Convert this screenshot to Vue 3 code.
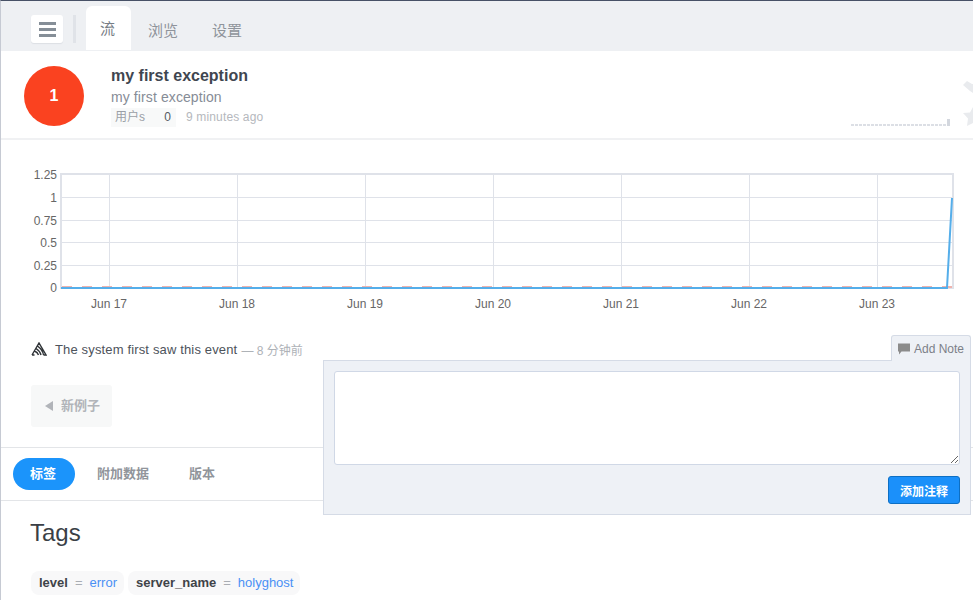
<script setup>
const yTicks = [
  { label: '1.25', y: 174 },
  { label: '1', y: 197 },
  { label: '0.75', y: 220 },
  { label: '0.5', y: 242 },
  { label: '0.25', y: 265 },
  { label: '0', y: 287 }
]
const xTicks = [
  { label: 'Jun 17', x: 109 },
  { label: 'Jun 18', x: 237 },
  { label: 'Jun 19', x: 365 },
  { label: 'Jun 20', x: 493 },
  { label: 'Jun 21', x: 621 },
  { label: 'Jun 22', x: 749 },
  { label: 'Jun 23', x: 877 }
]
const tags = [
  { key: 'level', value: 'error' },
  { key: 'server_name', value: 'holyghost' }
]
</script>

<template>
  <div class="page">
    <header class="topbar">
      <button class="menu-btn" aria-label="menu">
        <span></span><span></span><span></span>
      </button>
      <div class="sep"></div>
      <nav class="top-tabs">
        <a class="top-tab active">流</a>
        <a class="top-tab">浏览</a>
        <a class="top-tab">设置</a>
      </nav>
    </header>

    <section class="event-head">
      <div class="level-badge">1</div>
      <div class="event-info">
        <h1>my first exception</h1>
        <p class="culprit">my first exception</p>
        <div class="meta">
          <span class="users"><span>用户s</span><b>0</b></span>
          <span class="ago">9 minutes ago</span>
        </div>
      </div>
      <svg class="spark" width="100" height="8" viewBox="0 0 100 8">
        <line x1="0" y1="7" x2="96" y2="7" stroke="#dcdfe5" stroke-width="2" stroke-dasharray="3 1" />
        <rect x="96" y="1" width="3" height="7" fill="#d3d7de" />
      </svg>
      <svg class="fav" width="10" height="46" viewBox="0 0 10 46">
        <path d="M0 4 L4 0 L9 3 L10 3 V12 L7 10 Z" fill="#e9ebee" />
        <path d="M10 26 L7 31.5 L0 32 L5 37.5 L4 45 L10 42 Z" fill="#e9ebee" />
      </svg>
    </section>

    <section class="chart-wrap">
      <svg class="chart" width="972" height="160" viewBox="0 160 972 160">
        <rect x="61" y="174" width="892" height="114" fill="#fff" stroke="#dfe2e9" stroke-width="2" />
        <line v-for="t in yTicks.slice(1, 5)" :key="t.label" x1="61" :y1="t.y + 0.5" x2="952" :y2="t.y + 0.5" stroke="#dfe2e9" />
        <line v-for="t in xTicks" :key="t.label" :x1="t.x + 0.5" y1="174" :x2="t.x + 0.5" y2="288" stroke="#dfe2e9" />
        <line x1="62" y1="287" x2="952" y2="287" stroke="#efb3ae" stroke-width="2" stroke-dasharray="10 10" />
        <polyline points="61,288 947,288 952,198" fill="none" stroke="#55aeea" stroke-width="2" />
        <text v-for="t in yTicks" :key="t.label" x="57" :y="t.y + 5" text-anchor="end" class="tick">{{ t.label }}</text>
        <text v-for="t in xTicks" :key="t.label" :x="t.x" y="308" text-anchor="middle" class="tick">{{ t.label }}</text>
      </svg>
    </section>

    <section class="first-seen">
      <svg width="16" height="14" viewBox="0 0 16 14" class="sentry">
        <path d="M1 13 L8 1 L15 13 H12.5 M1 13 H3.5 M6.5 4 C10 6.5 12 9.5 12.5 13 M5 6.5 C8 8.5 9.5 10.5 10 13 M3.5 9 C6 10 7 11.5 7.5 13" fill="none" stroke="#2f3337" stroke-width="1.4" />
      </svg>
      <span class="msg">The system first saw this event</span>
      <span class="msg-time">— 8 分钟前</span>
    </section>

    <div class="pager">
      <button class="older"><i class="tri"></i>新例子</button>
    </div>

    <nav class="sub-tabs">
      <a class="pill active">标签</a>
      <a class="pill">附加数据</a>
      <a class="pill">版本</a>
    </nav>

    <section class="tags">
      <h2>Tags</h2>
      <div class="tag-list">
        <span v-for="t in tags" :key="t.key" class="tag">
          <b>{{ t.key }}</b><em>=</em><a>{{ t.value }}</a>
        </span>
      </div>
    </section>

    <aside class="note">
      <div class="note-tab">
        <svg width="12" height="12" viewBox="0 0 12 12">
          <path d="M0 0.5 H12 V8.5 H3.5 L1 11.5 V8.5 H0 Z" fill="#8b8b8b" />
        </svg>
        Add Note
      </div>
      <div class="note-body">
        <textarea></textarea>
        <div class="note-foot">
          <button class="add-btn">添加注释</button>
        </div>
      </div>
    </aside>
  </div>
</template>

<style>
html, body {
  margin: 0;
  overflow: hidden;
}
</style>

<style scoped>
.page {
  position: relative;
  width: 973px;
  height: 600px;
  overflow: hidden;
  box-sizing: border-box;
  border-top: 1px solid #475166;
  border-left: 1px solid #c6cad3;
  background: #fff;
  font-family: "Liberation Sans", "Noto Sans CJK SC", sans-serif;
  font-size: 12px;
  color: #3f4650;
}

.topbar {
  display: flex;
  align-items: flex-start;
  height: 50px;
  padding-left: 30px;
  background: #eef0f3;
}
.menu-btn {
  display: flex;
  flex-direction: column;
  justify-content: center;
  gap: 3px;
  width: 32px;
  height: 28px;
  margin-top: 14px;
  padding: 1px 7px 0 8px;
  border: 0;
  border-radius: 3px;
  background: #fff;
  box-shadow: 0 1px 1px #dcdfe4;
}
.menu-btn span {
  display: block;
  width: 17px;
  height: 3px;
  background: #858e97;
}
.sep {
  width: 3px;
  height: 28px;
  margin: 14px 10px 0;
  background: #e0e3e8;
}
.top-tabs {
  display: flex;
}
.top-tab {
  width: 60px;
  margin-right: 4px;
  padding-top: 19px;
  text-align: center;
  font-size: 15px;
  line-height: 22px;
  color: #8f949b;
}
.top-tab.active {
  width: 45px;
  height: 44px;
  box-sizing: border-box;
  margin-top: 5px;
  margin-right: 2px;
  padding-top: 12px;
  padding-right: 2px;
  border-radius: 6px 6px 0 0;
  background: #fff;
  color: #777d85;
}

.event-head {
  position: relative;
  display: flex;
  align-items: flex-start;
  height: 89px;
  box-sizing: border-box;
  border-bottom: 2px solid #f0f1f3;
}
.level-badge {
  width: 60px;
  height: 60px;
  margin: 15px 0 0 23px;
  border-radius: 50%;
  background: #fa4220;
  color: #fff;
  font-size: 16px;
  font-weight: 700;
  line-height: 60px;
  text-align: center;
}
.event-info {
  margin-left: 27px;
  padding-top: 16px;
}
.event-info h1 {
  margin: 0;
  font-size: 16px;
  line-height: 18px;
  font-weight: 700;
  color: #3f4650;
}
.culprit {
  margin: 3px 0 0;
  font-size: 14px;
  line-height: 18px;
  letter-spacing: 0.1px;
  color: #868c96;
}
.meta {
  display: flex;
  align-items: center;
  margin-top: 2px;
  line-height: 19px;
}
.users {
  display: flex;
  justify-content: space-between;
  width: 65px;
  box-sizing: border-box;
  padding: 0 5px 0 4px;
  background: #f8f9f9;
  color: #9b9fa6;
}
.users b {
  font-weight: 400;
  color: #555b63;
}
.ago {
  margin-left: 10px;
  letter-spacing: 0.15px;
  color: #b5b8bd;
}
.spark {
  position: absolute;
  left: 850px;
  top: 67px;
}
.fav {
  position: absolute;
  left: 962px;
  top: 30px;
}

.chart-wrap {
  height: 180px;
  margin-top: 20px;
}
.chart {
  display: block;
  margin-left: -1px;
}
.tick {
  font-size: 12px;
  fill: #666;
}

.first-seen {
  display: flex;
  align-items: center;
  height: 18px;
  margin: 0 0 0 30px;
  padding-top: 0;
  font-size: 13px;
}
.sentry {
  margin-right: 8px;
}
.msg {
  letter-spacing: 0.15px;
  color: #4d535b;
}
.msg-time {
  margin-left: 4px;
  font-size: 12px;
  color: #aeb2b7;
}

.pager {
  height: 62px;
  padding: 27px 0 0 30px;
  box-sizing: content-box;
}
.older {
  display: flex;
  align-items: center;
  width: 81px;
  height: 42px;
  padding: 0 0 3px 14px;
  border: 0;
  border-radius: 3px;
  background: #f7f8f8;
  font: 700 13px "Liberation Sans", "Noto Sans CJK SC", sans-serif;
  color: #b1b4b9;
}
.tri {
  width: 0;
  height: 0;
  margin: 3px 8px 0 0;
  border: 5px solid transparent;
  border-left: 0;
  border-right: 8px solid #b1b4b9;
}

.sub-tabs {
  display: flex;
  align-items: center;
  height: 54px;
  box-sizing: border-box;
  padding-left: 12px;
  border-top: 1px solid #e3e5e8;
  border-bottom: 1px solid #e3e5e8;
  font-size: 13px;
  font-weight: 700;
}
.pill {
  padding: 0 17px;
  line-height: 32px;
  border-radius: 16px;
  color: #91959b;
  margin-right: 6px;
}
.pill.active {
  padding: 0 19px 0 17px;
  background: #1b94fb;
  color: #fff;
  margin-right: 5px;
}

.tags {
  padding: 18px 0 0 30px;
}
.tags h2 {
  margin: 0 0 0 -1px;
  font-size: 24px;
  line-height: 28px;
  font-weight: 400;
  color: #3a3f46;
}
.tag-list {
  display: flex;
  gap: 4px;
  margin-top: 24px;
}
.tag {
  padding: 0 7px 0 8px;
  line-height: 24px;
  border-radius: 8px;
  background: #f8f8f9;
  font-size: 13px;
}
.tag b {
  color: #3f4348;
}
.tag em {
  margin: 0 7px;
  font-style: normal;
  color: #a9adb3;
}
.tag a {
  color: #4a90f5;
}

.note {
  position: absolute;
  left: 322px;
  top: 334px;
  width: 648px;
}
.note-tab {
  position: relative;
  z-index: 1;
  display: flex;
  align-items: center;
  gap: 4px;
  width: 80px;
  height: 26px;
  box-sizing: border-box;
  margin: 0 0 -1px auto;
  padding-left: 6px;
  border: 1px solid #d5dbe6;
  border-bottom: 0;
  border-radius: 3px 3px 0 0;
  background: #eef1f6;
  font-size: 12px;
  color: #7c8088;
}
.note-body {
  box-sizing: border-box;
  height: 155px;
  padding: 10px;
  border: 1px solid #d5dbe6;
  background: #eef1f6;
}
.note-body textarea {
  display: block;
  width: 626px;
  height: 94px;
  box-sizing: border-box;
  border: 1px solid #d0d8e6;
  border-radius: 3px;
  background: #fff;
}
.note-foot {
  display: flex;
  justify-content: flex-end;
  margin-top: 11px;
}
.add-btn {
  width: 72px;
  height: 28px;
  padding: 0;
  border: 1px solid #0d6fc4;
  border-radius: 3px;
  background: #1b90fa;
  font: 700 12px "Liberation Sans", "Noto Sans CJK SC", sans-serif;
  color: #fff;
}
</style>
